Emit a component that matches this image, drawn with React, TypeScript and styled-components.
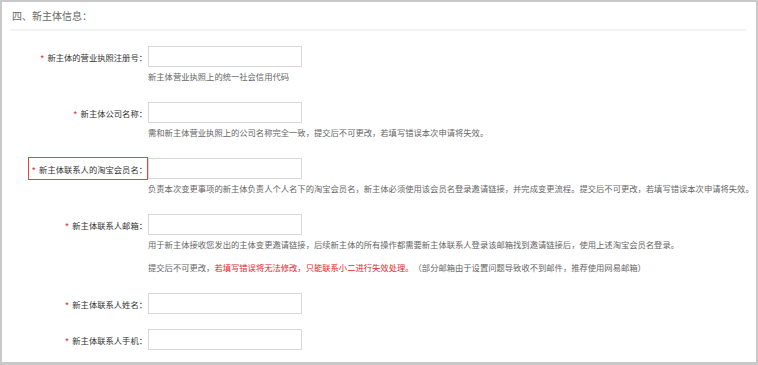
import React from "react";
import styled, { createGlobalStyle } from "styled-components";

const GlobalStyle = createGlobalStyle`
  html, body { margin: 0; padding: 0; background: #fff; }
  body {
    font-family: "Noto Sans CJK SC", "Noto Sans", sans-serif;
    text-spacing-trim: space-all;
  }
  * { box-sizing: border-box; }
`;

const Frame = styled.div`
  width: 758px;
  height: 365px;
  border: 2px solid #c9c9c9;
  border-bottom-width: 3px;
  background: #fff;
  overflow: hidden;
`;

const Header = styled.div`
  margin: 0 10px 0 8px;
  padding: 1px 0 0 2px;
  height: 29px;
  line-height: 26px;
  font-size: 10px;
  color: #666;
  border-bottom: 2px solid #f3f3f3;
`;

const Form = styled.div`
  padding-top: 15px;
  display: flex;
  flex-direction: column;
`;

const Row = styled.div<{ $tight?: boolean }>`
  display: grid;
  grid-template-columns: 146px 154px;
  margin-bottom: ${(p) => (p.$tight ? "15px" : "17px")};
`;

const LabelCell = styled.div`
  height: 21px;
  display: flex;
  align-items: center;
  justify-content: flex-end;
`;

const LabelBox = styled.label<{ $highlight?: boolean }>`
  display: inline-flex;
  align-items: center;
  height: 23px;
  padding-left: 3px;
  border: 1px solid ${(p) => (p.$highlight ? "#e44545" : "transparent")};
  font-size: 8.3px;
  color: #333;
  white-space: nowrap;
`;

const Star = styled.span`
  display: inline-block;
  width: 7px;
  color: #d3272b;
  font-family: "Liberation Sans", Arial, sans-serif;
  font-size: 9px;
  line-height: 1;
  padding-top: 4px;
`;

const Field = styled.input`
  width: 154px;
  height: 21px;
  margin: 0;
  padding: 0 4px;
  border: 1px solid #d8d8d8;
  border-radius: 0;
  background: #fff;
  outline: none;
  font-size: 9px;
  font-family: inherit;
`;

const Help = styled.div`
  grid-column: 2;
  font-size: 8.3px;
  line-height: 18px;
  color: #666;
  white-space: nowrap;
`;

const HelpLine = styled.div<{ $gap?: boolean }>`
  margin-top: ${(p) => (p.$gap ? "5px" : "0")};
`;

const Warn = styled.span`
  color: #e3262b;
`;

type RowProps = {
  label: string;
  highlight?: boolean;
  children?: React.ReactNode;
};

const FormRow = ({ label, highlight, children }: RowProps) => (
  <Row $tight={!children}>
    <LabelCell>
      <LabelBox $highlight={highlight}>
        <Star>*</Star>
        {label}：
      </LabelBox>
    </LabelCell>
    <Field />
    {children ? <Help>{children}</Help> : null}
  </Row>
);

export default function App() {
  return (
    <>
      <GlobalStyle />
      <Frame>
        <Header>四、新主体信息：</Header>
        <Form>
          <FormRow label="新主体的营业执照注册号">
            <HelpLine>新主体营业执照上的统一社会信用代码</HelpLine>
          </FormRow>
          <FormRow label="新主体公司名称">
            <HelpLine>
              需和新主体营业执照上的公司名称完全一致，提交后不可更改，若填写错误本次申请将失效。
            </HelpLine>
          </FormRow>
          <FormRow label="新主体联系人的淘宝会员名" highlight>
            <HelpLine>
              负责本次变更事项的新主体负责人个人名下的淘宝会员名，新主体必须使用该会员名登录邀请链接，并完成变更流程。提交后不可更改，若填写错误本次申请将失效。
            </HelpLine>
          </FormRow>
          <FormRow label="新主体联系人邮箱">
            <HelpLine>
              用于新主体接收您发出的主体变更邀请链接，后续新主体的所有操作都需要新主体联系人登录该邮箱找到邀请链接后，使用上述淘宝会员名登录。
            </HelpLine>
            <HelpLine $gap>
              提交后不可更改，<Warn>若填写错误将无法修改，只能联系小二进行失效处理。</Warn>（部分邮箱由于设置问题导致收不到邮件，推荐使用网易邮箱）
            </HelpLine>
          </FormRow>
          <FormRow label="新主体联系人姓名" />
          <FormRow label="新主体联系人手机" />
        </Form>
      </Frame>
    </>
  );
}
